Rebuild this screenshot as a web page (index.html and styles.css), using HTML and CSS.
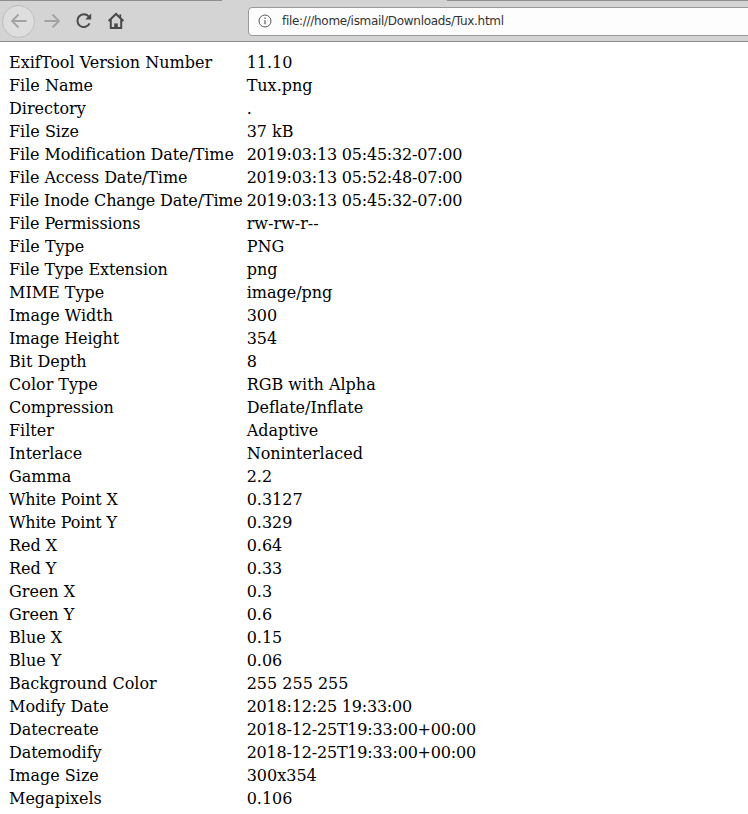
FILE: index.html
```html
<!DOCTYPE html>
<html lang="en">
<head>
    <meta charset="UTF-8">
    <meta name="viewport" content="width=device-width, initial-scale=1.0">
    <title>Tux.html</title>
    <link rel="stylesheet" href="styles.css">
</head>
<body>
    <div class="toolbar">
        <div class="tab-strip">
            <div class="tab-line"></div>
            <div class="tab-gap"></div>
            <div class="tab-line tab-line-right"></div>
        </div>
        <div class="nav-row">
            <div class="back-btn">
                <svg class="icon" width="20" height="20" viewBox="0 0 20 20"><path d="M17.5 10H3M9.5 3.5 3 10l6.5 6.5" fill="none" stroke="#a3a3a3" stroke-width="1.8"/></svg>
            </div>
            <svg class="icon forward" width="20" height="20" viewBox="0 0 20 20"><path d="M2.5 10H17M10.5 3.5 17 10l-6.5 6.5" fill="none" stroke="#a3a3a3" stroke-width="1.8"/></svg>
            <svg class="icon reload" width="20" height="20" viewBox="0 0 20 20"><path d="M15.6 12.4A6.4 6.4 0 1 1 14.6 5.4L16 7" fill="none" stroke="#4a4a4a" stroke-width="2"/><path d="M17.2 2.6v6h-6z" fill="#4a4a4a"/></svg>
            <svg class="icon home" width="20" height="20" viewBox="0 0 20 20"><path d="M2.6 10 10 3l7.4 7M4.8 8.6V17h10.4V8.6" fill="none" stroke="#4a4a4a" stroke-width="2"/><path d="M8.2 17v-4.6h3.6V17z" fill="#4a4a4a"/><path d="M13.4 3.4h1.8v3h-1.8z" fill="#4a4a4a"/></svg>
            <div class="url-bar">
                <svg class="info" width="16" height="16" viewBox="0 0 16 16"><circle cx="8" cy="8" r="6" fill="none" stroke="#5a5a5a" stroke-width="1"/><path d="M8 7.2v4" stroke="#5a5a5a" stroke-width="1.2"/><path d="M8 4.6v1.4" stroke="#5a5a5a" stroke-width="1.2"/></svg>
                <span class="url-text">file:///home/ismail/Downloads/Tux.html</span>
            </div>
        </div>
    </div>

    <table class="exif-table">
        <tbody>
            <tr><td>ExifTool Version Number</td><td>11.10</td></tr>
            <tr><td>File Name</td><td>Tux.png</td></tr>
            <tr><td>Directory</td><td>.</td></tr>
            <tr><td>File Size</td><td>37 kB</td></tr>
            <tr><td class="tight">File Modification Date/Time</td><td class="date">2019:03:13 05:45:32-07:00</td></tr>
            <tr><td class="tight">File Access Date/Time</td><td class="date">2019:03:13 05:52:48-07:00</td></tr>
            <tr><td class="tighter">File Inode Change Date/Time</td><td class="date">2019:03:13 05:45:32-07:00</td></tr>
            <tr><td class="tight">File Permissions</td><td>rw-rw-r--</td></tr>
            <tr><td>File Type</td><td>PNG</td></tr>
            <tr><td class="tight">File Type Extension</td><td>png</td></tr>
            <tr><td>MIME Type</td><td>image/png</td></tr>
            <tr><td>Image Width</td><td>300</td></tr>
            <tr><td class="tight">Image Height</td><td>354</td></tr>
            <tr><td>Bit Depth</td><td>8</td></tr>
            <tr><td>Color Type</td><td>RGB with Alpha</td></tr>
            <tr><td class="tight">Compression</td><td>Deflate/Inflate</td></tr>
            <tr><td>Filter</td><td>Adaptive</td></tr>
            <tr><td>Interlace</td><td>Noninterlaced</td></tr>
            <tr><td>Gamma</td><td>2.2</td></tr>
            <tr><td class="tighter">White Point X</td><td>0.3127</td></tr>
            <tr><td class="tighter">White Point Y</td><td>0.329</td></tr>
            <tr><td>Red X</td><td>0.64</td></tr>
            <tr><td>Red Y</td><td>0.33</td></tr>
            <tr><td>Green X</td><td>0.3</td></tr>
            <tr><td>Green Y</td><td>0.6</td></tr>
            <tr><td>Blue X</td><td>0.15</td></tr>
            <tr><td>Blue Y</td><td>0.06</td></tr>
            <tr><td>Background Color</td><td>255 255 255</td></tr>
            <tr><td>Modify Date</td><td class="date">2018:12:25 19:33:00</td></tr>
            <tr><td>Datecreate</td><td class="date">2018-12-25T19:33:00+00:00</td></tr>
            <tr><td class="tight">Datemodify</td><td class="date">2018-12-25T19:33:00+00:00</td></tr>
            <tr><td>Image Size</td><td>300x354</td></tr>
            <tr><td>Megapixels</td><td>0.106</td></tr>
        </tbody>
    </table>
</body>
</html>
```

FILE: styles.css
```css
body {
    margin: 0;
    background: #fff;
    color: #000;
    font-family: "DejaVu Serif", serif;
    font-size: 16px;
}

.toolbar {
    height: 42px;
    box-sizing: border-box;
    background: #d4d4d4;
    border-bottom: 1px solid #8a8a8a;
    overflow: hidden;
}

.tab-strip {
    display: flex;
    height: 1px;
}

.tab-line {
    width: 222px;
    height: 1px;
    background: #8e8e8e;
}

.tab-gap {
    flex: 1;
}

.tab-line-right {
    width: 301px;
}

.nav-row {
    display: flex;
    align-items: center;
    height: 40px;
}

.back-btn {
    width: 31px;
    height: 31px;
    margin-left: 2px;
    border: 1px solid #bdbdbd;
    border-radius: 50%;
    background: #dedede;
    display: flex;
    align-items: center;
    justify-content: center;
    flex-shrink: 0;
}

.icon {
    flex-shrink: 0;
}

.forward {
    margin-left: 7px;
}

.reload {
    margin-left: 12px;
}

.home {
    margin-left: 12px;
}

.url-bar {
    display: flex;
    align-items: center;
    height: 29px;
    box-sizing: border-box;
    margin-left: 122px;
    flex: 1;
    margin-right: -10px;
    background: #fdfdfd;
    border: 1px solid #9a9a9a;
    border-radius: 4px;
    padding-left: 8px;
}

.url-text {
    margin-left: 9px;
    font-family: "DejaVu Sans", sans-serif;
    font-size: 12px;
    letter-spacing: -0.3px;
    color: #333;
}

.exif-table {
    margin: 8px 6px;
    border-spacing: 2px;
}

.exif-table td {
    padding: 1px;
}

.exif-table .tight {
    letter-spacing: -0.1px;
}

.exif-table .tighter {
    letter-spacing: -0.17px;
}

.exif-table .date {
    letter-spacing: -0.2px;
}
```
